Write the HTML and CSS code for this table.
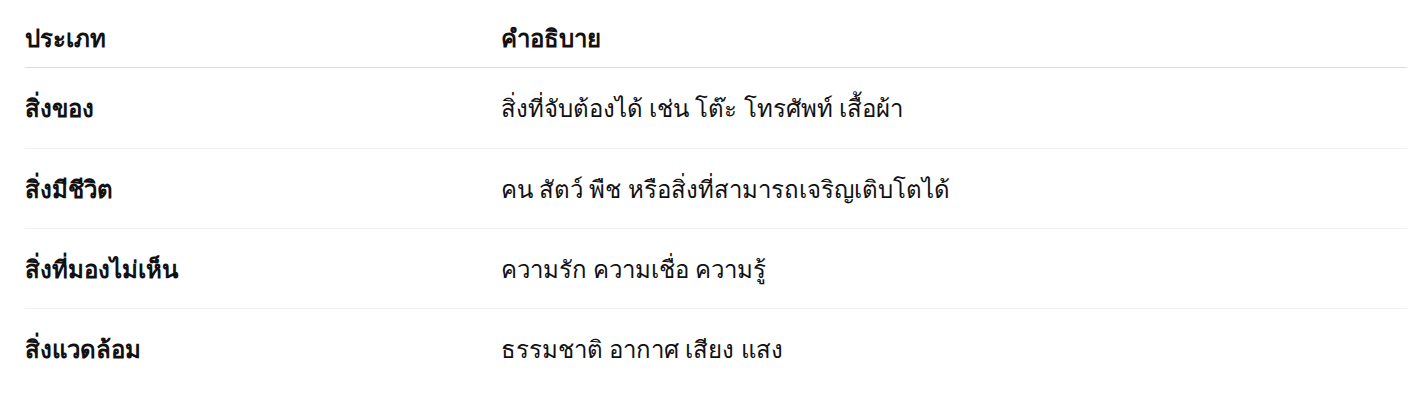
FILE: index.html
```html
<!DOCTYPE html>
<html lang="th">
<head>
<meta charset="utf-8">
<title>ประเภท</title>
<link rel="stylesheet" href="styles.css">
</head>
<body>
<div class="wrap">
  <table class="tbl">
    <thead>
      <tr><th class="c1">ประเภท</th><th class="c2">คำอธิบาย</th></tr>
    </thead>
    <tbody>
      <tr><td class="c1">สิ่งของ</td><td class="c2">สิ่งที่จับต้องได้ เช่น โต๊ะ โทรศัพท์ เสื้อผ้า</td></tr>
      <tr><td class="c1">สิ่งมีชีวิต</td><td class="c2">คน สัตว์ พืช หรือสิ่งที่สามารถเจริญเติบโตได้</td></tr>
      <tr><td class="c1">สิ่งที่มองไม่เห็น</td><td class="c2">ความรัก ความเชื่อ ความรู้</td></tr>
      <tr><td class="c1">สิ่งแวดล้อม</td><td class="c2">ธรรมชาติ อากาศ เสียง แสง</td></tr>
    </tbody>
  </table>
</div>
</body>
</html>
```
FILE: styles.css
```css
html, body {
  margin: 0;
  padding: 0;
  background: #ffffff;
}
.wrap {
  padding: 14px 19px 0 25px;
}
.tbl {
  width: 100%;
  border-collapse: collapse;
  font-family: "Noto Sans", "DejaVu Sans", sans-serif;
  font-size: 24px;
  line-height: 32px;
  color: #111111;
}
.tbl th, .tbl td {
  text-align: left;
  padding: 0;
  vertical-align: middle;
}
.tbl th {
  height: 48px;
  padding-bottom: 5px;
  font-weight: 700;
  border-bottom: 1px solid #dcdcdc;
}
.tbl td {
  height: 79px;
  border-bottom: 1px solid #f0f0f0;
}
.tbl tbody tr:first-child td {
  height: 80px;
}
.tbl tbody tr:last-child td {
  border-bottom: none;
}
.tbl .c1 {
  width: 476px;
  font-weight: 700;
}
.tbl td.c2 {
  font-weight: 400;
}
```
